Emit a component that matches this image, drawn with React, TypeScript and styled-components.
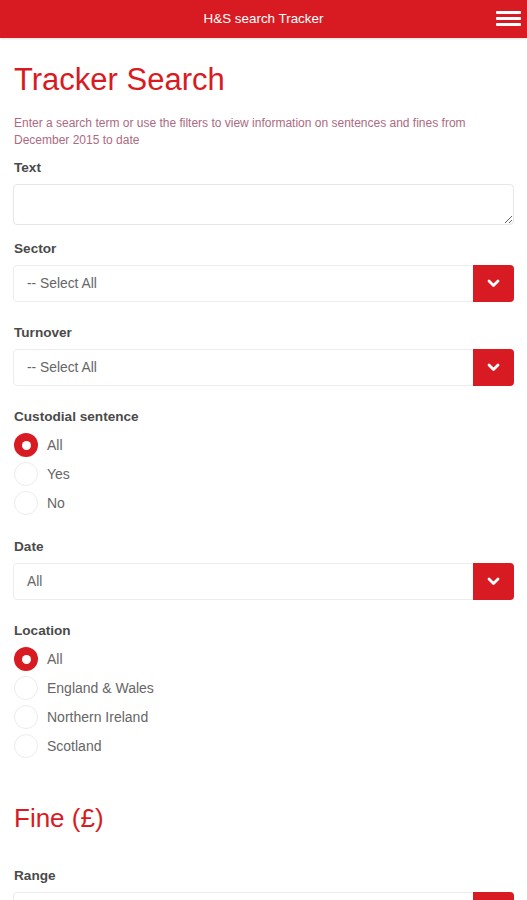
import React from "react";
import styled, { createGlobalStyle } from "styled-components";

const RED = "#d81b23";

const Global = createGlobalStyle`
  html, body { margin: 0; padding: 0; background: #fff; }
  body { font-family: "Liberation Sans", Arial, sans-serif; }
  * { box-sizing: border-box; }
`;

const Page = styled.div`
  width: 527px;
  min-height: 900px;
  background: #fff;
`;

const Header = styled.header`
  height: 38px;
  background: ${RED};
  display: flex;
  align-items: center;
  justify-content: center;
  position: relative;
  box-shadow: 0 1px 2px rgba(0, 0, 0, 0.12);
`;

const HeaderTitle = styled.div`
  color: #fff;
  font-size: 13.4px;
  line-height: 16px;
`;

const Burger = styled.div`
  position: absolute;
  right: 6px;
  top: 11px;
  width: 25px;
  display: flex;
  flex-direction: column;
  gap: 3.5px;
`;

const BurgerBar = styled.span`
  display: block;
  height: 2.5px;
  background: #fff;
  border-radius: 1px;
`;

const Main = styled.main`
  padding: 0 13px 0 13px;
  display: flex;
  flex-direction: column;
`;

const Title = styled.h1<{ $size: number; $top: number; $bottom: number }>`
  margin: ${(p) => p.$top}px 0 ${(p) => p.$bottom}px 1px;
  font-weight: 400;
  color: ${RED};
  font-size: ${(p) => p.$size}px;
  line-height: ${(p) => Math.round(p.$size * 1.12)}px;
`;

const Intro = styled.p`
  margin: 0 0 10px 1px;
  max-width: 470px;
  font-size: 12px;
  line-height: 17px;
  color: #ad6a80;
`;

const Label = styled.div<{ $top?: number }>`
  margin: ${(p) => p.$top ?? 0}px 0 8px 1px;
  font-size: 13.6px;
  line-height: 17px;
  font-weight: 700;
  color: #4a4a4a;
`;

const TextArea = styled.textarea`
  display: block;
  width: 501px;
  height: 41px;
  border: 1px solid #e6e6e6;
  border-radius: 4px;
  resize: vertical;
  outline: none;
  font-family: inherit;
  font-size: 14px;
  padding: 8px 12px;
  margin: 0;
`;

const SelectBox = styled.div`
  width: 501px;
  height: 37px;
  display: flex;
  align-items: stretch;
  border: 1px solid #ececec;
  border-radius: 4px;
  background: #fff;
`;

const SelectValue = styled.div`
  flex: 1;
  display: flex;
  align-items: center;
  padding-left: 13px;
  font-size: 13.8px;
  color: #666;
`;

const SelectButton = styled.div`
  width: 41px;
  margin: -1px -1px -1px 0;
  background: ${RED};
  border-radius: 0 4px 4px 0;
  display: flex;
  align-items: center;
  justify-content: center;
`;

const RadioGroup = styled.div`
  display: flex;
  flex-direction: column;
  gap: 5px;
`;

const RadioRow = styled.div`
  display: flex;
  align-items: center;
  height: 24px;
`;

const RadioCircle = styled.span<{ $checked?: boolean }>`
  width: 24px;
  height: 24px;
  border-radius: 50%;
  margin-left: 1px;
  flex: none;
  background: ${(p) => (p.$checked ? RED : "#fff")};
  border: ${(p) => (p.$checked ? "none" : "1px solid #ececec")};
  display: flex;
  align-items: center;
  justify-content: center;
  &::after {
    content: "";
    display: ${(p) => (p.$checked ? "block" : "none")};
    width: 9px;
    height: 9px;
    border-radius: 50%;
    background: #fff;
  }
`;

const RadioText = styled.span`
  margin-left: 9px;
  font-size: 14px;
  color: #666;
`;

const Chevron = () => (
  <svg width="13" height="9" viewBox="0 0 13 9">
    <path d="M2 2 L6.5 6.5 L11 2" fill="none" stroke="#fff" strokeWidth="2.8" strokeLinecap="round" strokeLinejoin="round" />
  </svg>
);

const Select = ({ value }: { value: string }) => (
  <SelectBox>
    <SelectValue>{value}</SelectValue>
    <SelectButton>
      <Chevron />
    </SelectButton>
  </SelectBox>
);

const Radios = ({ options }: { options: string[] }) => (
  <RadioGroup>
    {options.map((o, i) => (
      <RadioRow key={o}>
        <RadioCircle $checked={i === 0} />
        <RadioText>{o}</RadioText>
      </RadioRow>
    ))}
  </RadioGroup>
);

export default function App() {
  return (
    <Page>
      <Global />
      <Header>
        <HeaderTitle>H&amp;S search Tracker</HeaderTitle>
        <Burger>
          <BurgerBar />
          <BurgerBar />
          <BurgerBar />
        </Burger>
      </Header>
      <Main>
        <Title $size={31} $top={24} $bottom={18}>Tracker Search</Title>
        <Intro>
          Enter a search term or use the filters to view information on sentences and fines from December 2015 to date
        </Intro>
        <Label>Text</Label>
        <TextArea />
        <Label $top={15}>Sector</Label>
        <Select value="-- Select All" />
        <Label $top={22}>Turnover</Label>
        <Select value="-- Select All" />
        <Label $top={22}>Custodial sentence</Label>
        <Radios options={["All", "Yes", "No"]} />
        <Label $top={23}>Date</Label>
        <Select value="All" />
        <Label $top={22}>Location</Label>
        <Radios options={["All", "England & Wales", "Northern Ireland", "Scotland"]} />
        <Title $size={26} $top={46} $bottom={34}>Fine (£)</Title>
        <Label>Range</Label>
        <Select value="" />
      </Main>
    </Page>
  );
}
